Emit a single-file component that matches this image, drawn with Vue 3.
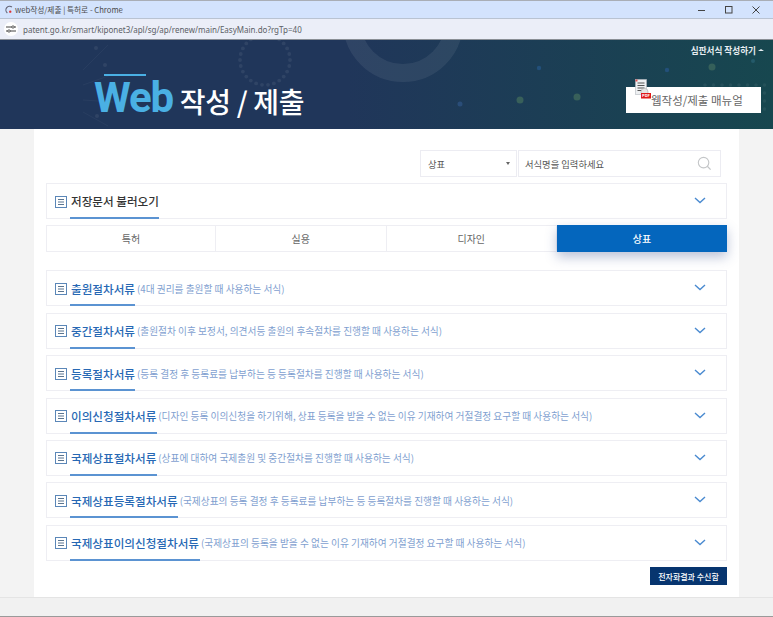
<script setup>
const rows = [
  { title: '출원절차서류', desc: '(4대 권리를 출원할 때 사용하는 서식)', line: 65 },
  { title: '중간절차서류', desc: '(출원절차 이후 보정서, 의견서등 출원의 후속절차를 진행할 때 사용하는 서식)', line: 65 },
  { title: '등록절차서류', desc: '(등록 결정 후 등록료를 납부하는 등 등록절차를 진행할 때 사용하는 서식)', line: 65 },
  { title: '이의신청절차서류', desc: '(디자인 등록 이의신청을 하기위해, 상표 등록을 받을 수 없는 이유 기재하여 거절결정 요구할 때 사용하는 서식)', line: 87 },
  { title: '국제상표절차서류', desc: '(상표에 대하여 국제출원 및 중간절차를 진행할 때 사용하는 서식)', line: 87 },
  { title: '국제상표등록절차서류', desc: '(국제상표의 등록 결정 후 등록료를 납부하는 등 등록절차를 진행할 때 사용하는 서식)', line: 108 },
  { title: '국제상표이의신청절차서류', desc: '(국제상표의 등록을 받을 수 없는 이유 기재하여 거절결정 요구할 때 사용하는 서식)', line: 130 },
]
const tabs = ['특허', '실용', '디자인', '상표']
const ringDots = Array.from({ length: 26 }, (_, i) => {
  const a = (i / 26) * Math.PI * 2
  return { x: 265 + 25 * Math.cos(a), y: 60 + 25 * Math.sin(a) }
})
const glows = [
  { x: 460, y: 104, r: 2.5, c: '#2a4d78' },
  { x: 520, y: 100, r: 3.5, c: '#38605a' },
  { x: 577, y: 97, r: 3.5, c: '#38605a' },
  { x: 539, y: 68, r: 2.2, c: '#23507a' },
  { x: 667, y: 70, r: 2.2, c: '#23507a' },
  { x: 712, y: 67, r: 3.5, c: '#35605a' },
  { x: 753, y: 61, r: 2, c: '#245a6a' },
]
const gridDots = []
for (let y = 85; y < 115; y += 8) for (let x = 705; x < 773; x += 8.5) gridDots.push({ x, y })
</script>

<template>
  <div class="window">
    <div class="titlebar">
      <div class="title-left">
        <svg class="favicon" viewBox="0 0 12 12" width="10" height="10">
          <path d="M9.5 2.5A4.2 4.2 0 1 0 4 9.5" fill="none" stroke="#667" stroke-width="1.4" />
          <circle cx="7.5" cy="8" r="1.4" fill="#d33" />
        </svg>
        <span class="title-text">web작성/제출 | 특허로 - Chrome</span>
      </div>
      <div class="controls">
        <svg viewBox="0 0 10 10" width="10" height="10"><path d="M1 5.5h7" stroke="#444" stroke-width="1" /></svg>
        <svg viewBox="0 0 10 10" width="10" height="10"><rect x="1.5" y="1.5" width="6.5" height="6.5" fill="none" stroke="#444" /></svg>
        <svg viewBox="0 0 10 10" width="10" height="10"><path d="M1.5 1.5l7 7M8.5 1.5l-7 7" stroke="#444" /></svg>
      </div>
    </div>
    <div class="addressbar">
      <span class="site-icon">
        <svg viewBox="0 0 10 8" width="10" height="8">
          <path d="M0 2h6M8 2h2M0 6h2M4 6h6" stroke="#444" stroke-width="1" />
          <circle cx="7" cy="2" r="1.2" fill="none" stroke="#444" stroke-width=".8" />
          <circle cx="3" cy="6" r="1.2" fill="none" stroke="#444" stroke-width=".8" />
        </svg>
      </span>
      <span class="url">patent.go.kr/smart/kiponet3/apl/sg/ap/renew/main/EasyMain.do?rgTp=40</span>
    </div>

    <header class="banner">
      <svg class="banner-art" viewBox="0 0 773 89" width="773" height="89">
        <circle cx="403" cy="-18" r="51" fill="none" stroke="#fff" stroke-opacity=".07" stroke-width="18" />
        <circle v-for="(d, i) in ringDots" :key="'r' + i" :cx="d.x" :cy="d.y - 40" r="1.9" fill="#fff" fill-opacity=".07" />
        <g stroke="#fff" stroke-opacity=".04" stroke-width="1">
          <path d="M83 30l25 -25M83 45l28 -10M83 60l30 2M83 72l25 14" />
        </g>
        <circle cx="96" cy="8" r="2" fill="#fff" fill-opacity=".07" />
        <circle cx="105" cy="25" r="2" fill="#fff" fill-opacity=".07" />
        <circle cx="97" cy="76" r="2" fill="#fff" fill-opacity=".07" />
        <circle v-for="(g, i) in glows" :key="'g' + i" :cx="g.x" :cy="g.y - 40" :r="g.r" :fill="g.c" />
        <circle v-for="(d, i) in gridDots" :key="'d' + i" :cx="d.x" :cy="d.y - 40" r="1.8" fill="#fff" fill-opacity=".06" />
      </svg>
      <div class="banner-title">
        <span class="web">Web</span>
        <span class="banner-ko">작성 / 제출</span>
      </div>
      <div class="banner-right">
        <div class="trial-link">심판서식 작성하기 <i class="caret-up"></i></div>
        <div class="manual">
          <svg class="pdf-icon" viewBox="0 0 17 23" width="17" height="23">
            <rect x="0.5" y="0.5" width="11" height="15" fill="#eef0f2" stroke="#b5bac0" stroke-width=".6" />
            <rect x="0.5" y="0.5" width="2" height="2" fill="#e05050" />
            <path d="M2.5 4h7M2.5 6.5h7M2.5 9h7M2.5 11.5h5" stroke="#555" stroke-width="1" />
            <circle cx="9.5" cy="13" r="3.6" fill="#e6e6e6" stroke="#aaa" stroke-width=".6" />
            <rect x="6" y="14" width="10" height="5.5" fill="#e01818" />
            <text x="11" y="18.4" text-anchor="middle" font-size="4" font-weight="700" fill="#fff">PDF</text>
          </svg>
          <span>웹작성/제출 매뉴얼</span>
        </div>
      </div>
    </header>

    <main class="page">
      <div class="sheet">
        <div class="search">
          <div class="select"><span>상표</span><i class="caret-down"></i></div>
          <div class="input">
            <span>서식명을 입력하세요</span>
            <svg viewBox="0 0 16 16" width="15" height="15">
              <circle cx="7" cy="7" r="5.6" fill="none" stroke="#c4c6c8" stroke-width="1.2" />
              <path d="M11 11l3.5 3.5" stroke="#c4c6c8" stroke-width="1.4" />
            </svg>
          </div>
        </div>

        <section class="row saved">
          <svg class="doc" viewBox="0 0 12 12" width="12" height="12">
            <rect x=".5" y=".5" width="11" height="11" fill="#fff" stroke="#5b87b8" />
            <path d="M3 3.5h6M3 6h6M3 8.5h6" stroke="#5b7590" stroke-width="1" />
          </svg>
          <h3 class="saved-title">저장문서 불러오기</h3>
          <svg class="chev" viewBox="0 0 12 7" width="12" height="7"><path d="M1 1l5 4.5L11 1" fill="none" stroke="#4a8ad0" stroke-width="1.4" /></svg>
          <span class="underline" style="width:89px"></span>
        </section>

        <nav class="tabs">
          <div v-for="(t, i) in tabs" :key="t" class="tab" :class="{ active: i === 3 }">{{ t }}</div>
        </nav>

        <div class="list">
          <section v-for="r in rows" :key="r.title" class="row item">
            <svg class="doc" viewBox="0 0 12 12" width="12" height="12">
              <rect x=".5" y=".5" width="11" height="11" fill="#fff" stroke="#5b87b8" />
              <path d="M3 3.5h6M3 6h6M3 8.5h6" stroke="#5b7590" stroke-width="1" />
            </svg>
            <h3 class="item-title">{{ r.title }}</h3>
            <span class="item-desc">{{ r.desc }}</span>
            <svg class="chev" viewBox="0 0 12 7" width="12" height="7"><path d="M1 1l5 4.5L11 1" fill="none" stroke="#4a8ad0" stroke-width="1.4" /></svg>
            <span class="underline" :style="{ width: r.line + 'px' }"></span>
          </section>
        </div>

        <div class="footer-btn"><button>전자화결과 수신함</button></div>
      </div>
    </main>
    <div class="bottom-strip"></div>
  </div>
</template>

<style>
html, body { margin: 0; padding: 0; background: #f1f1f1; }
</style>

<style scoped>
* { box-sizing: border-box; }
.window {
  width: 773px;
  height: 617px;
  overflow: hidden;
  display: flex;
  flex-direction: column;
  font-family: "Noto Sans CJK KR", "Noto Sans", sans-serif;
  border-bottom: 1px solid #9a9a9a;
}
.titlebar {
  height: 19px;
  flex: none;
  background: #d3e3fd;
  border-top: 1px solid #a9aeb6;
  border-bottom: 1px solid #b9c3d2;
  padding-left: 4px;
  display: flex;
  align-items: center;
  justify-content: space-between;
}
.title-left { display: flex; align-items: center; gap: 1px; }
.title-text { font-size: 7.7px; color: #4a4a4a; }
.controls { display: flex; gap: 17px; padding-right: 12px; }
.addressbar {
  height: 20px;
  flex: none;
  background: #ebeef8;
  display: flex;
  align-items: center;
  padding-left: 4px;
  gap: 5px;
}
.site-icon {
  width: 14px;
  height: 14px;
  border-radius: 50%;
  background: #fff;
  display: flex;
  align-items: center;
  justify-content: center;
}
.url { font-size: 8px; color: #5c5f66; font-family: "Noto Sans", sans-serif; }
.banner {
  height: 90px;
  flex: none;
  position: relative;
  background: linear-gradient(90deg, #20365a 0%, #20365a 45%, #17474f 100%);
  border-top: 1px solid #8a8f96;
  display: flex;
  justify-content: space-between;
  overflow: hidden;
}
.banner-art { position: absolute; left: 0; top: 0; }
.banner-title {
  position: relative;
  margin: 36px 0 0 94px;
  display: flex;
  align-items: flex-start;
  height: 44px;
}
.banner-title::before {
  content: "";
  position: absolute;
  left: 10px;
  top: -2px;
  width: 42px;
  height: 2px;
  background: #4ab0e4;
}
.web {
  font-family: Roboto, sans-serif;
  font-weight: 700;
  font-size: 42px;
  line-height: 44px;
  letter-spacing: -1.2px;
  color: #4ab0e4;
}
.banner-ko {
  margin: 5px 0 0 7px;
  font-size: 28px;
  line-height: 40px;
  font-weight: 500;
  letter-spacing: -0.3px;
  color: #fff;
}
.banner-right {
  position: relative;
  display: flex;
  flex-direction: column;
  align-items: flex-end;
  padding-right: 9px;
}
.trial-link {
  margin-top: 3px;
  font-size: 8.6px;
  line-height: 14px;
  font-weight: 700;
  color: #e8eef2;
  display: flex;
  align-items: center;
  gap: 2px;
}
.caret-up { width: 0; height: 0; border: 3px solid transparent; border-top: 0; border-bottom: 2px solid #e8eef2; }
.manual {
  position: relative;
  margin-top: 30px;
  margin-right: 3px;
  width: 135px;
  height: 26px;
  background: #fff;
  color: #666;
  font-size: 11.5px;
  display: flex;
  align-items: center;
  padding-left: 25px;
}
.pdf-icon { position: absolute; left: 9px; top: -8px; }
.page {
  height: 468px;
  flex: none;
  background: #f3f3f3;
  padding-left: 34px;
}
.sheet {
  width: 705px;
  height: 468px;
  background: #fff;
  padding: 21px 12px 0;
  display: flex;
  flex-direction: column;
}
.search { display: flex; justify-content: flex-end; margin-right: 6px; height: 27px; flex: none; }
.select, .input {
  border: 1px solid #ececf2;
  display: flex;
  align-items: center;
  justify-content: space-between;
}
.select { width: 97px; margin-right: 1px; padding: 0 6px 0 7px; font-size: 9.3px; color: #555; }
.input { width: 203px; padding: 0 8px 0 6px; font-size: 9.3px; color: #555; }
.caret-down { width: 0; height: 0; border: 2.5px solid transparent; border-bottom: 0; border-top: 3px solid #666; }
.row {
  position: relative;
  height: 36px;
  border: 1px solid #eeeef3;
  display: flex;
  align-items: center;
  padding: 1px 27px 0 8px;
  flex: none;
}
.saved { margin-top: 6px; }
.doc { flex: none; margin-right: 4px; }
.saved-title {
  margin: 0;
  font-size: 11.6px;
  font-weight: 500;
  color: #333;
  margin-top: -1px;
}
.chev { position: absolute; right: 20px; top: 13px; }
.underline {
  position: absolute;
  left: 23px;
  bottom: -1px;
  height: 2px;
  background: #5b93d2;
}
.tabs {
  display: grid;
  grid-template-columns: 170px 170.5px 170.5px 170px;
  margin-top: 6px;
  height: 27px;
  flex: none;
}
.tab {
  height: 100%;
  border: 1px solid #eeeef3;
  border-left-width: 0;
  display: flex;
  align-items: center;
  justify-content: center;
  font-size: 10px;
  color: #666;
}
.tab:first-child { border-left-width: 1px; }
.tab.active {
  background: #0466bd;
  border: 0;
  color: #fff;
  font-weight: 500;
  box-shadow: 0 5px 12px rgba(60, 80, 140, 0.35);
}
.list {
  margin-top: 18.4px;
  display: flex;
  flex-direction: column;
  gap: 6.4px;
}
.item-title {
  margin: 0;
  font-size: 11.6px;
  font-weight: 500;
  color: #2768b4;
  white-space: nowrap;
}
.item-desc {
  margin-left: 2px;
  font-size: 9.7px;
  color: #7f9fd0;
  white-space: nowrap;
}
.footer-btn { margin-top: 6.5px; display: flex; justify-content: flex-end; }
.footer-btn button {
  width: 77px;
  height: 18px;
  padding: 0;
  border: 0;
  background: #07356f;
  color: #fff;
  font: 500 8px "Noto Sans CJK KR", sans-serif;
}
.bottom-strip {
  flex: 1;
  background: #f1f1f1;
  border-top: 1px solid #e4e4e4;
}
</style>
